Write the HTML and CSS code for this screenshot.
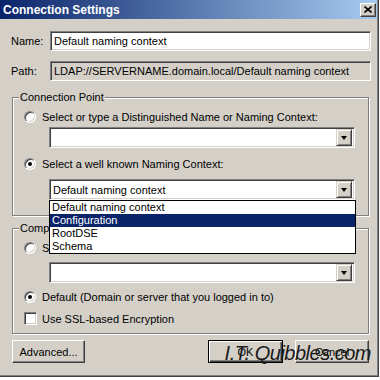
FILE: index.html
```html
<!DOCTYPE html>
<html lang="en">
<head>
    <meta charset="UTF-8">
    <meta name="viewport" content="width=device-width, initial-scale=1.0">
    <title>Connection Settings</title>
    <link rel="stylesheet" href="styles.css">
</head>
<body>
    <div class="window">
        <div class="titlebar">
            <span class="title">Connection Settings</span>
            <span class="close">
                <svg width="8" height="7" viewBox="0 0 8 7"><path d="M0.5 0.5L7.5 6.5M7.5 0.5L0.5 6.5" stroke="#000" stroke-width="1.6" fill="none"/></svg>
            </span>
        </div>

        <div class="content">
            <div class="field-row">
                <span class="field-label">Name:</span>
                <div class="textbox">Default naming context</div>
            </div>
            <div class="field-row">
                <span class="field-label">Path:</span>
                <div class="textbox readonly">LDAP://SERVERNAME.domain.local/Default naming context</div>
            </div>

            <fieldset class="group group-conn">
                <legend>Connection Point</legend>
                <div class="option opt-first"><span class="radio"></span>Select or type a Distinguished Name or Naming Context:</div>
                <div class="combo combo-first"><div class="combo-value"></div><span class="combo-btn"></span></div>
                <div class="option opt-second"><span class="radio checked"></span>Select a well known Naming Context:</div>
                <div class="combo combo-second">
                    <div class="combo-value">Default naming context</div><span class="combo-btn"></span>
                    <ul class="droplist">
                        <li>Default naming context</li>
                        <li class="selected">Configuration</li>
                        <li>RootDSE</li>
                        <li>Schema</li>
                    </ul>
                </div>
            </fieldset>

            <fieldset class="group group-comp">
                <legend>Computer</legend>
                <div class="option opt-first"><span class="radio"></span>Select or type a domain or server:</div>
                <div class="combo combo-third"><div class="combo-value"></div><span class="combo-btn"></span></div>
                <div class="option opt-default"><span class="radio checked"></span>Default (Domain or server that you logged in to)</div>
                <div class="option opt-check"><span class="checkbox"></span>Use SSL-based Encryption</div>
            </fieldset>

            <div class="buttons">
                <span class="btn btn-advanced">Advanced...</span>
                <span class="btn btn-ok">OK</span>
                <span class="btn btn-cancel">Cancel</span>
            </div>
        </div>

        <div class="watermark">I.T. Quibbles.com</div>
    </div>
</body>
</html>
```

FILE: styles.css
```css
body {
    margin: 0;
    background-color: #fff;
    font-family: "Liberation Sans", Arial, sans-serif;
    font-size: 11px;
    color: #000;
}

.window {
    position: relative;
    width: 379px;
    height: 377px;
    box-sizing: border-box;
    background-color: #d4d0c8;
    border-right: 1px solid #404040;
    border-bottom: 1px solid #404040;
    box-shadow: inset -1px -1px #808080;
}

.titlebar {
    height: 19px;
    margin-right: 1px;
    display: flex;
    align-items: center;
    justify-content: space-between;
    padding: 0 1px 0 3px;
    background: linear-gradient(to right, #0a246a, #a6caf0);
}

.title {
    color: #fff;
    font-weight: bold;
    font-size: 12px;
}

.close {
    width: 16px;
    height: 14px;
    box-sizing: border-box;
    display: flex;
    align-items: center;
    justify-content: center;
    background-color: #d4d0c8;
    border: 1px solid;
    border-color: #fff #404040 #404040 #fff;
    box-shadow: inset -1px -1px #808080;
}

.content {
    display: flex;
    flex-direction: column;
    padding: 12px 7px 0 11px;
}

.field-row {
    display: flex;
    align-items: center;
    height: 20px;
}

.field-row + .field-row {
    margin-top: 10px;
}

.field-label {
    width: 39px;
}

.textbox {
    flex: 1;
    height: 20px;
    box-sizing: border-box;
    padding: 0 3px;
    line-height: 18px;
    white-space: nowrap;
    overflow: hidden;
    background-color: #fff;
    border: 1px solid;
    border-color: #808080 #fff #fff #808080;
    box-shadow: inset 1px 1px #404040, inset -1px -1px #d4d0c8;
}

.textbox.readonly {
    background-color: #d4d0c8;
}

.group {
    min-width: 0;
    margin: 10px 2px 0 1px;
    padding: 0 0 15px;
    border: 1px solid #808080;
    box-shadow: inset 1px 1px #fff, 1px 1px #fff;
}

.group legend {
    margin-left: 6px;
    padding: 0 1px;
    line-height: 13px;
    background-color: #d4d0c8;
}

.group-comp {
    margin-top: 6px;
    padding-bottom: 8px;
}

.option {
    display: flex;
    align-items: center;
    height: 13px;
    margin-left: 11px;
    gap: 6px;
    white-space: nowrap;
}

.opt-first {
    margin-top: 6px;
}

.opt-second {
    margin-top: 9px;
}

.opt-default {
    margin-top: 7px;
}

.opt-check {
    margin-top: 9px;
    gap: 5px;
}

.radio {
    width: 12px;
    height: 12px;
    box-sizing: border-box;
    border-radius: 50%;
    background-color: #fff;
    border: 1px solid;
    border-color: #808080 #fff #fff #808080;
    box-shadow: inset 1px 1px #404040, inset -1px -1px #d4d0c8;
    display: flex;
    align-items: center;
    justify-content: center;
}

.radio.checked::after {
    content: "";
    width: 4px;
    height: 4px;
    border-radius: 50%;
    background-color: #000;
}

.checkbox {
    width: 13px;
    height: 13px;
    box-sizing: border-box;
    background-color: #fff;
    border: 1px solid;
    border-color: #808080 #fff #fff #808080;
    box-shadow: inset 1px 1px #404040, inset -1px -1px #d4d0c8;
}

.combo {
    position: relative;
    display: flex;
    align-items: center;
    height: 21px;
    box-sizing: border-box;
    margin: 4px 13px 0 36px;
    padding: 2px;
    background-color: #fff;
    border: 1px solid;
    border-color: #808080 #fff #fff #808080;
    box-shadow: inset 1px 1px #404040, inset -1px -1px #d4d0c8;
}

.combo-second {
    margin-top: 9px;
}

.combo-third {
    margin-top: 8px;
}

.combo-value {
    flex: 1;
    padding-left: 1px;
    white-space: nowrap;
}

.combo-btn {
    width: 16px;
    height: 17px;
    box-sizing: border-box;
    display: flex;
    align-items: center;
    justify-content: center;
    background-color: #d4d0c8;
    border: 1px solid;
    border-color: #d4d0c8 #404040 #404040 #d4d0c8;
    box-shadow: inset 1px 1px #fff, inset -1px -1px #808080;
}

.combo-btn::after {
    content: "";
    border-style: solid;
    border-width: 4px 3.5px 0;
    border-color: #000 transparent transparent;
}

.droplist {
    position: absolute;
    top: 20px;
    left: -1px;
    right: -2px;
    z-index: 2;
    margin: 0;
    padding: 0;
    list-style: none;
    background-color: #fff;
    border: 1px solid #000;
}

.droplist li {
    height: 13px;
    line-height: 13px;
    padding-left: 2px;
}

.droplist li.selected {
    background-color: #0a246a;
    color: #fff;
}

.buttons {
    display: flex;
    margin: 6px 2px 0 1px;
}

.btn {
    height: 23px;
    box-sizing: border-box;
    display: flex;
    align-items: center;
    justify-content: center;
    background-color: #d4d0c8;
    border: 1px solid;
    border-color: #fff #404040 #404040 #fff;
    box-shadow: inset -1px -1px #808080;
}

.btn-advanced {
    width: 73px;
}

.btn-ok {
    width: 75px;
    margin-left: auto;
    border-color: #000;
    box-shadow: inset 1px 1px #fff, inset -1px -1px #404040, inset -2px -2px #808080;
}

.btn-cancel {
    width: 74px;
    margin-left: 12px;
}

.watermark {
    position: absolute;
    right: 7px;
    bottom: 11px;
    font-size: 20px;
    font-style: italic;
    letter-spacing: -0.5px;
    color: #1a1a1a;
}
```
